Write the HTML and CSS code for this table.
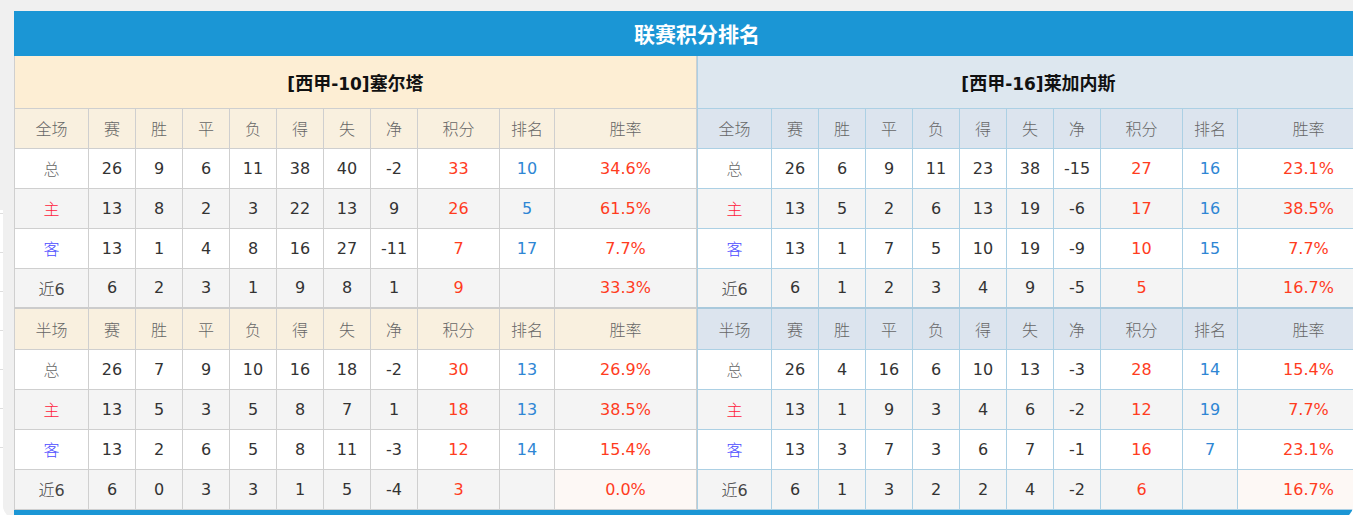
FILE: index.html
```html
<!DOCTYPE html>
<html lang="zh-CN">
<head>
<meta charset="utf-8">
<title>联赛积分排名</title>
<link rel="stylesheet" href="styles.css">
</head>
<body>
<div class="backdrop">
  <div class="backdrop-top"></div>
  <div class="backdrop-list">
    <div class="bl-row"></div><div class="bl-row"></div><div class="bl-row"></div>
    <div class="bl-row"></div><div class="bl-row"></div><div class="bl-row"></div><div class="bl-row"></div>
  </div>
</div>
<div class="panel">
  <div class="standings">
    <div class="title">联赛积分排名</div>
    <div class="halves">
      <table class="team home">
        <colgroup><col class="c-first"><col class="c-n"><col class="c-n"><col class="c-n"><col class="c-n"><col class="c-n"><col class="c-n"><col class="c-n"><col class="c-pts"><col class="c-rank"><col></colgroup>
        <tr class="team-row"><td colspan="11">[<span class="team-name">西甲</span>-10]<span class="team-name">塞尔塔</span></td></tr>
        <tr class="head"><td>全场</td><td>赛</td><td>胜</td><td>平</td><td>负</td><td>得</td><td>失</td><td>净</td><td>积分</td><td>排名</td><td>胜率</td></tr>
        <tr class="odd"><td class="k-all">总</td><td>26</td><td>9</td><td>6</td><td>11</td><td>38</td><td>40</td><td>-2</td><td class="pts">33</td><td class="rank">10</td><td class="rate">34.6%</td></tr>
        <tr class="even"><td class="k-home">主</td><td>13</td><td>8</td><td>2</td><td>3</td><td>22</td><td>13</td><td>9</td><td class="pts">26</td><td class="rank">5</td><td class="rate">61.5%</td></tr>
        <tr class="odd"><td class="k-away">客</td><td>13</td><td>1</td><td>4</td><td>8</td><td>16</td><td>27</td><td>-11</td><td class="pts">7</td><td class="rank">17</td><td class="rate">7.7%</td></tr>
        <tr class="even"><td class="k-last"><span class="cjk">近</span>6</td><td>6</td><td>2</td><td>3</td><td>1</td><td>9</td><td>8</td><td>1</td><td class="pts">9</td><td class="rank"></td><td class="rate">33.3%</td></tr>
        <tr class="head sub"><td>半场</td><td>赛</td><td>胜</td><td>平</td><td>负</td><td>得</td><td>失</td><td>净</td><td>积分</td><td>排名</td><td>胜率</td></tr>
        <tr class="odd"><td class="k-all">总</td><td>26</td><td>7</td><td>9</td><td>10</td><td>16</td><td>18</td><td>-2</td><td class="pts">30</td><td class="rank">13</td><td class="rate">26.9%</td></tr>
        <tr class="even"><td class="k-home">主</td><td>13</td><td>5</td><td>3</td><td>5</td><td>8</td><td>7</td><td>1</td><td class="pts">18</td><td class="rank">13</td><td class="rate">38.5%</td></tr>
        <tr class="odd"><td class="k-away">客</td><td>13</td><td>2</td><td>6</td><td>5</td><td>8</td><td>11</td><td>-3</td><td class="pts">12</td><td class="rank">14</td><td class="rate">15.4%</td></tr>
        <tr class="even last"><td class="k-last"><span class="cjk">近</span>6</td><td>6</td><td>0</td><td>3</td><td>3</td><td>1</td><td>5</td><td>-4</td><td class="pts">3</td><td class="rank"></td><td class="rate">0.0%</td></tr>
      </table>
      <table class="team away">
        <colgroup><col class="c-first"><col class="c-n"><col class="c-n"><col class="c-n"><col class="c-n"><col class="c-n"><col class="c-n"><col class="c-n"><col class="c-pts"><col class="c-rank"><col></colgroup>
        <tr class="team-row"><td colspan="11">[<span class="team-name">西甲</span>-16]<span class="team-name">莱加内斯</span></td></tr>
        <tr class="head"><td>全场</td><td>赛</td><td>胜</td><td>平</td><td>负</td><td>得</td><td>失</td><td>净</td><td>积分</td><td>排名</td><td>胜率</td></tr>
        <tr class="odd"><td class="k-all">总</td><td>26</td><td>6</td><td>9</td><td>11</td><td>23</td><td>38</td><td>-15</td><td class="pts">27</td><td class="rank">16</td><td class="rate">23.1%</td></tr>
        <tr class="even"><td class="k-home">主</td><td>13</td><td>5</td><td>2</td><td>6</td><td>13</td><td>19</td><td>-6</td><td class="pts">17</td><td class="rank">16</td><td class="rate">38.5%</td></tr>
        <tr class="odd"><td class="k-away">客</td><td>13</td><td>1</td><td>7</td><td>5</td><td>10</td><td>19</td><td>-9</td><td class="pts">10</td><td class="rank">15</td><td class="rate">7.7%</td></tr>
        <tr class="even"><td class="k-last"><span class="cjk">近</span>6</td><td>6</td><td>1</td><td>2</td><td>3</td><td>4</td><td>9</td><td>-5</td><td class="pts">5</td><td class="rank"></td><td class="rate">16.7%</td></tr>
        <tr class="head sub"><td>半场</td><td>赛</td><td>胜</td><td>平</td><td>负</td><td>得</td><td>失</td><td>净</td><td>积分</td><td>排名</td><td>胜率</td></tr>
        <tr class="odd"><td class="k-all">总</td><td>26</td><td>4</td><td>16</td><td>6</td><td>10</td><td>13</td><td>-3</td><td class="pts">28</td><td class="rank">14</td><td class="rate">15.4%</td></tr>
        <tr class="even"><td class="k-home">主</td><td>13</td><td>1</td><td>9</td><td>3</td><td>4</td><td>6</td><td>-2</td><td class="pts">12</td><td class="rank">19</td><td class="rate">7.7%</td></tr>
        <tr class="odd"><td class="k-away">客</td><td>13</td><td>3</td><td>7</td><td>3</td><td>6</td><td>7</td><td>-1</td><td class="pts">16</td><td class="rank">7</td><td class="rate">23.1%</td></tr>
        <tr class="even last"><td class="k-last"><span class="cjk">近</span>6</td><td>6</td><td>1</td><td>3</td><td>2</td><td>2</td><td>4</td><td>-2</td><td class="pts">6</td><td class="rank"></td><td class="rate">16.7%</td></tr>
      </table>
    </div>
    <div class="foot"></div>
  </div>
</div>
</body>
</html>
```

FILE: styles.css
```css
* { box-sizing: border-box; }
html, body { margin: 0; padding: 0; }
body {
  width: 1353px;
  height: 515px;
  overflow: hidden;
  background: #ffffff;
  font-family: "DejaVu Sans", "Noto Sans CJK SC", sans-serif;
  position: relative;
}
.backdrop-top { height: 210px; background: #f0f0f0; }
.backdrop-list { width: 10px; border-right: 1px solid #d8d8d8; }
.bl-row { height: 39px; border-bottom: 1px solid #dedede; }
.bl-row:first-child { height: 4px; }
.panel {
  position: absolute;
  left: 3px;
  top: 0;
  width: 1350px;
  height: 518px;
  background: #f0f0f0;
  border-radius: 12px;
  overflow: hidden;
  padding: 11px 0 0 11px;
}
.standings { width: 1366px; background: #fff; }
.title {
  height: 45px;
  background: #1b96d5;
  color: #fff;
  font-family: "Noto Sans CJK SC", sans-serif;
  font-weight: bold;
  font-size: 21px;
  line-height: 45px;
  text-align: center;
}
.halves { display: flex; }
table.team {
  width: 683px;
  table-layout: fixed;
  border-collapse: collapse;
  font-size: 16px;
  color: #333;
}
col.c-first { width: 74px; }
col.c-n { width: 47px; }
col.c-pts { width: 82px; }
col.c-rank { width: 55px; }
table.team td {
  height: 40px;
  padding: 0;
  text-align: center;
  border: 1px solid #cfcfcf;
  white-space: nowrap;
}
table.away td { border-color: #acd0e4; }
table.home { border-right: 1px solid #cfcfcf; }
.team-row td {
  height: 52px !important;
  font-size: 17px;
  font-weight: bold;
  color: #111;
  border-top: none !important;
}
.team-name { font-family: "Noto Sans CJK SC", sans-serif; font-size: 18px; }
table.home .team-row td { background: #fdeed4; }
table.away .team-row td { background: #dde7ef; }
.head td { color: #666; font-family: "Noto Sans CJK SC", sans-serif; font-weight: 300; }
table.home .head td { background: #f9f0df; }
table.away .head td { background: #dce4ee; }
tr.sub td { border-top: 2px solid #cccccc; height: 41px; }
table.away tr.sub td { border-top-color: #a9c9dc; }
tr.odd td { background: #ffffff; }
tr.even td { background: #f4f4f4; }
tr.last td.rate { background: #fdf8f5; }
.k-all, .k-home, .k-away, .cjk { font-family: "Noto Sans CJK SC", sans-serif; font-weight: 300; }
.k-all { color: #666; }
.k-home { color: #ff1a3c; }
.k-away { color: #4b4bff; }
.k-last { color: #444; }
.pts, .rate { color: #ff3c1e; }
.rank { color: #2e86d4; }
.foot { height: 10px; background: #1b96d5; }
```
